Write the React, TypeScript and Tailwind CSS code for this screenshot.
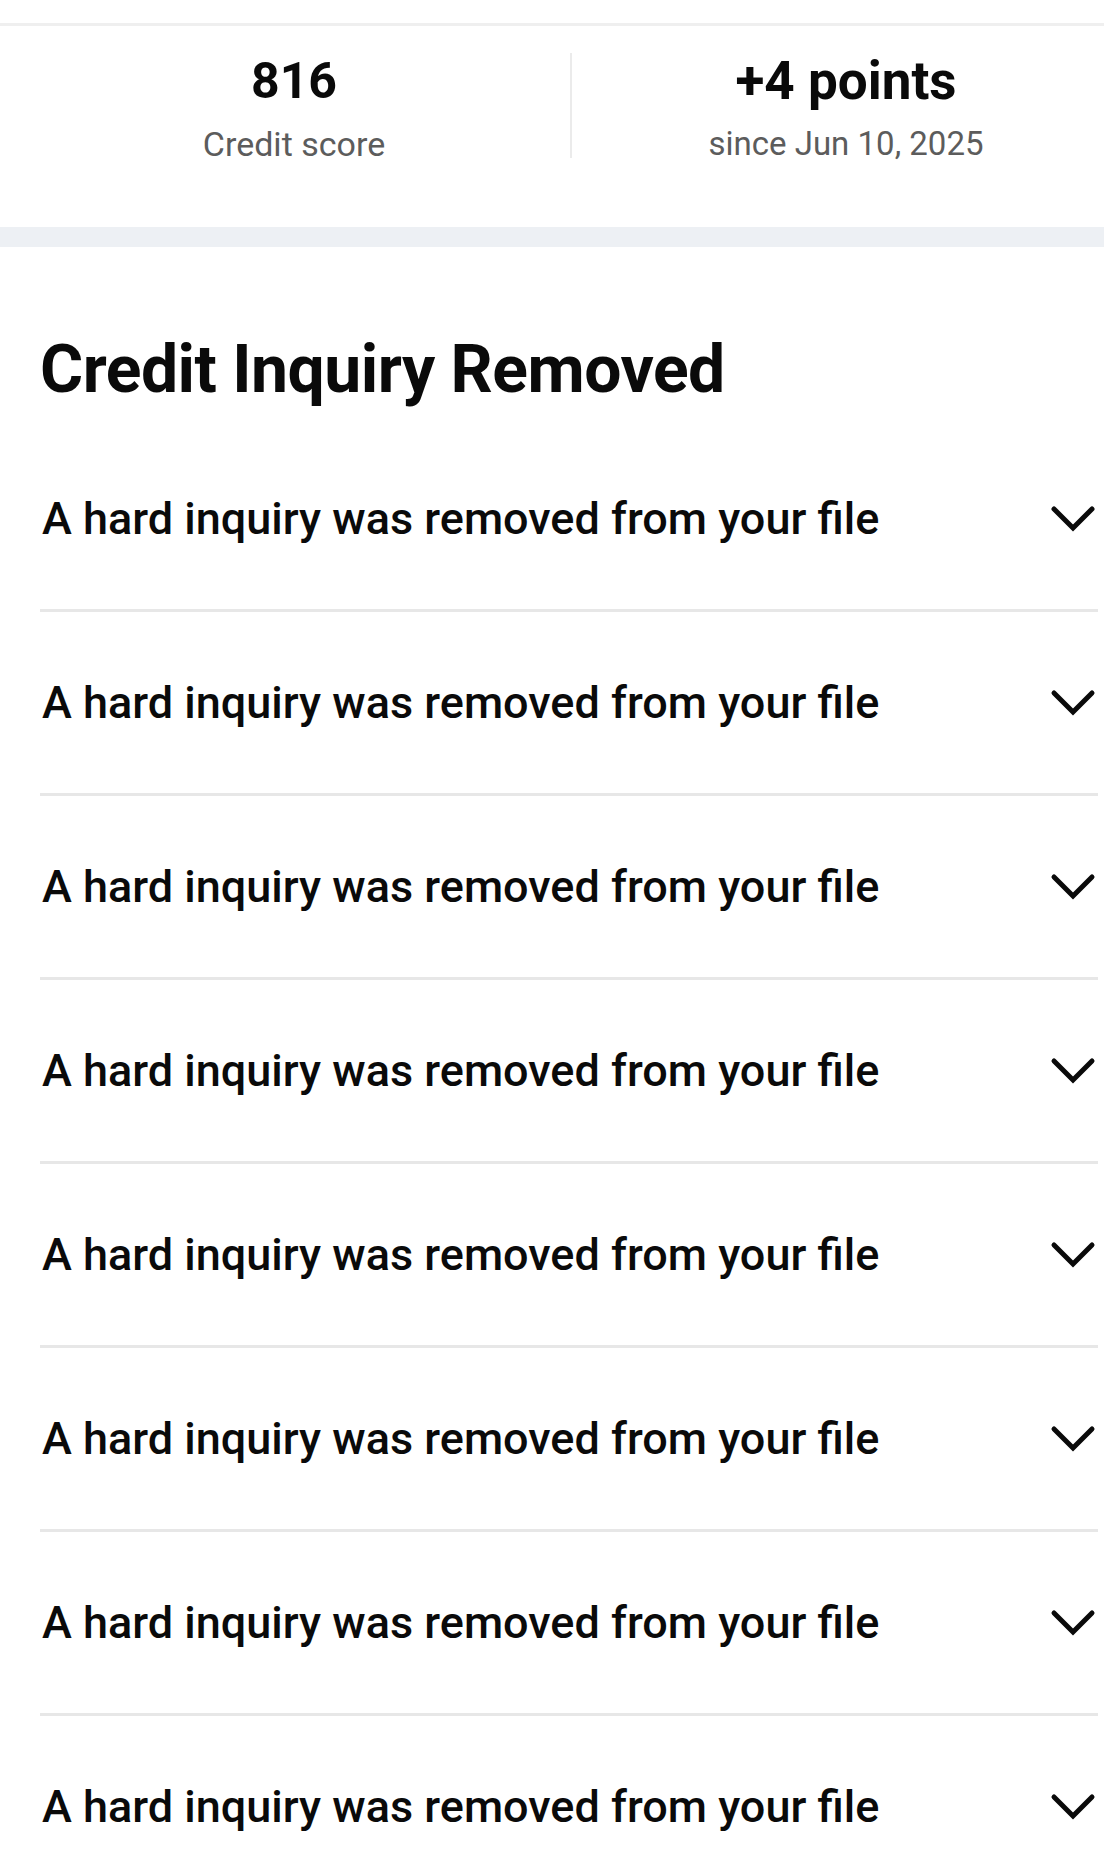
import React from "react";

function Chevron() {
  return (
    <svg width="46" height="28" viewBox="0 0 46 28" fill="none" className="shrink-0">
      <path d="M4 4 L23 23 L42 4" stroke="#0a0a0a" strokeWidth="5" strokeLinecap="round" strokeLinejoin="miter" />
    </svg>
  );
}

export default function App() {
  const rows = Array.from({ length: 8 });
  return (
    <div className="w-[1104px] h-[1872px] overflow-hidden bg-white text-[#0a0a0a]" style={{ fontFamily: "Roboto, 'Liberation Sans', sans-serif" }}>
      <div className="h-[23px]" />
      <div className="h-[3px] bg-[#efefef]" />
      <div className="h-[201px] flex">
        <div className="w-[570px] pl-[18px] flex flex-col items-center pt-[26px]">
          <div className="text-[50px] leading-[58px] font-bold">816</div>
          <div className="mt-[14px] text-[34px] leading-[40px] text-[#5c5c5c]">Credit score</div>
        </div>
        <div className="w-[2px] bg-[#ebebeb] mt-[27px] h-[105px]" />
        <div className="flex-1 pl-[16px] flex flex-col items-center pt-[26px]">
          <div className="text-[53px] leading-[58px] font-bold">+4 points</div>
          <div className="mt-[14px] text-[33px] leading-[40px] text-[#5c5c5c]">since Jun 10, 2025</div>
        </div>
      </div>
      <div className="h-[20px] bg-[#edf0f4]" />
      <div className="pl-[40px] pr-[6px]">
        <h1 className="mt-[86px] text-[66px] leading-[74px] font-bold tracking-[-0.5px]">Credit Inquiry Removed</h1>
        <div className="mt-[21px]">
          {rows.map((_, i) => (
            <div key={i} className={i < 7 ? "border-b-[3px] border-[#e7e7e7]" : ""}>
              <div className="h-[181px] flex items-center justify-between pl-[2px] pr-[2px]">
                <span className="text-[45px] leading-[54px] font-medium">A hard inquiry was removed from your file</span>
                <Chevron />
              </div>
            </div>
          ))}
        </div>
      </div>
    </div>
  );
}
